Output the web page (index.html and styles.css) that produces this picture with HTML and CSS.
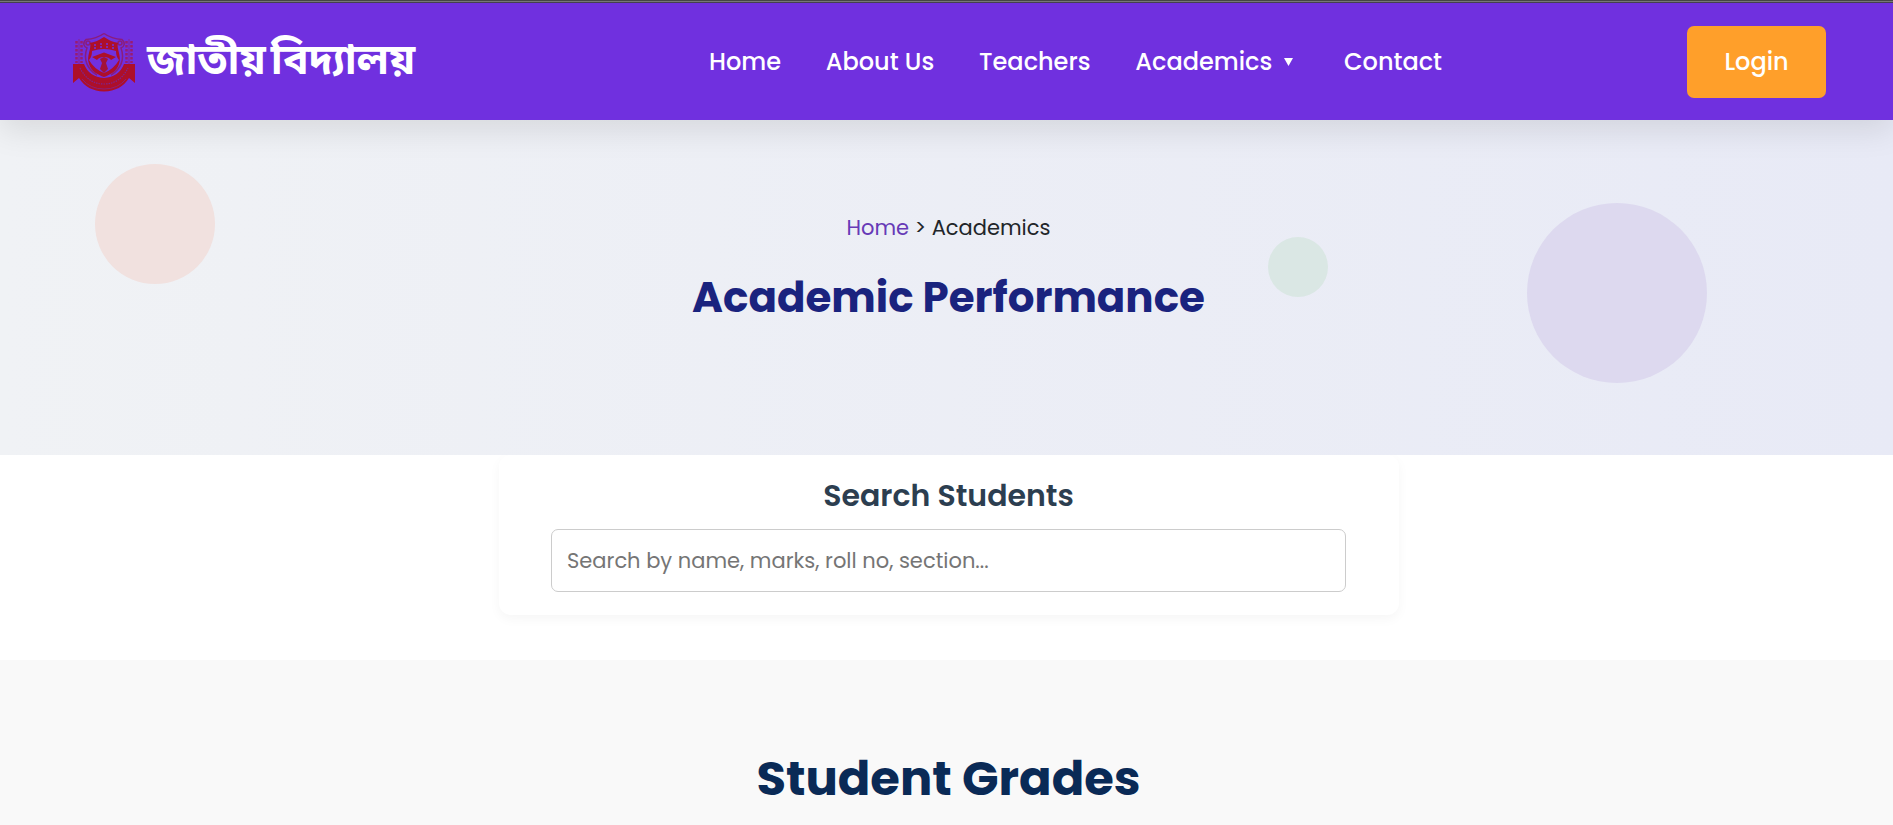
FILE: index.html
```html
<!DOCTYPE html>
<html lang="en">
<head>
<meta charset="utf-8">
<title>Academic Performance</title>
<link rel="stylesheet" href="styles.css">
</head>
<body>
<header class="header">
  <a class="brand">
    <svg class="crest" viewBox="0 0 62 60">
      <g fill="none" stroke="#8a1d7c" stroke-width="1.500">
        <path d="M31 1.500C26 5 20 7 13 7.500C9 11 11 15 14 16C10 27 14 37 24 43"/>
        <path d="M31 1.500C36 5 42 7 49 7.500C53 11 51 15 48 16C52 27 48 37 38 43"/>
        <circle cx="15" cy="11" r="2"/><circle cx="47" cy="11" r="2"/>
      </g>
      <path d="M31 5C25 9 21 10 17 11C19 16 13 24 16 32C18 39 25 43 31 45C37 43 44 39 46 32C49 24 43 16 45 11C41 10 37 9 31 5Z" fill="#ad0f2a"/>
      <path d="M19 19Q31 15 43 19Q43 25 46 28Q41 37 31 41Q21 37 16 28Q19 25 19 19Z" fill="#7130df"/>
      <path d="M22 17V12M28 16V10M34 16V10M40 17V12" stroke="#7130df" stroke-width="1.500" stroke-dasharray="2 1"/>
      <path d="M19 25L31 20.500L43 25L38 28Q36 25 31 25T24 28Z" fill="#ad1028"/>
      <path d="M27 27L31 25L35 27L33 31L35 37L31 41L27 37L29 31Z" fill="#a31238"/>
      <g fill="none" stroke="#981c72" stroke-width="2.500" stroke-dasharray="2.500 1.500">
        <path d="M3.500 9V31M8.500 9V31M53.500 9V31M58.500 9V31"/>
      </g>
      <path d="M6 7V32M56 7V32" stroke="#8a2090" stroke-width="1"/>
      <path d="M0 32L11 32Q16 45 31 46Q46 45 51 32L62 32V51L56 46Q48 59 31 59.500Q14 59 6 46L0 51Z" fill="#ad0f2a"/>
      <path d="M7 36Q15 52 31 52T55 36" fill="none" stroke="#7d2590" stroke-width="1.200" stroke-dasharray="1.500 1"/>
      <path d="M9 47Q17 57 31 57T53 47" fill="none" stroke="#8c1e76" stroke-width="1"/>
    </svg>
    <span class="brand-name" lang="bn">জাতীয় বিদ্যালয়</span>
  </a>
  <nav class="nav">
    <a>Home</a>
    <a>About Us</a>
    <a>Teachers</a>
    <a class="nav-academics">Academics<svg class="caret" viewBox="0 0 9 8"><path d="M0 0H9L4.500 8Z" fill="#fff"/></svg></a>
    <a>Contact</a>
  </nav>
  <a class="login">Login</a>
</header>
<main>
  <section class="hero">
    <i class="bubble bubble-pink"></i>
    <i class="bubble bubble-green"></i>
    <i class="bubble bubble-purple"></i>
    <p class="crumbs"><a>Home</a> &gt; Academics</p>
    <h1 class="hero-title">Academic Performance</h1>
  </section>
  <section class="search">
    <div class="search-card">
      <h2 class="search-title">Search Students</h2>
      <input class="search-input" type="text" placeholder="Search by name, marks, roll no, section...">
    </div>
  </section>
  <section class="grades">
    <h2 class="grades-title">Student Grades</h2>
  </section>
</main>
</body>
</html>
```
FILE: styles.css
```css
* { box-sizing: border-box; }
body {
  margin: 0;
  height: 825px;
  overflow: hidden;
  background: #fff;
  font-family: Poppins, Inter, "Noto Sans", sans-serif;
  color: #212529;
}
h1, h2, p { margin: 0; }
.header {
  position: relative;
  z-index: 2;
  height: 120px;
  padding: 3px 67px 0 73px;
  display: flex;
  align-items: center;
  justify-content: space-between;
  background: linear-gradient(#454545 0 1px, #777 1px 2px, #454050 2px 3px, #7030df 3px);
  box-shadow: 0 10px 30px rgba(0, 0, 0, .1);
  color: #fff;
}
.brand { display: flex; align-items: center; gap: 12px; width: 636px; }
.crest { width: 62px; height: 60px; }
.brand-name {
  font-family: "Noto Sans Bengali", Poppins, sans-serif;
  font-size: 42.6px;
  font-weight: 700;
  line-height: 56px;
  padding-top: 3px;
  word-spacing: -6px;
  white-space: nowrap;
}
.nav { display: flex; gap: 44.8px; flex: 1; font-size: 24px; font-weight: 500; white-space: nowrap; }
.nav-academics { display: flex; align-items: center; gap: 12px; margin-right: 6px; }
.caret { width: 9px; height: 8px; }
.login {
  width: 139px;
  height: 72px;
  border-radius: 7px;
  background: #ff9f2a;
  display: flex;
  align-items: center;
  justify-content: center;
  font-size: 24px;
  font-weight: 500;
}
.hero {
  position: relative;
  height: 335px;
  padding: 92px 0 0 4px;
  text-align: center;
  background: linear-gradient(90deg, #f0f2f5, #e8eaf6);
}
.bubble { position: absolute; border-radius: 50%; }
.bubble-pink { left: 95px; top: 44px; width: 120px; height: 120px; background: #f1e1df; }
.bubble-green { left: 1268px; top: 117px; width: 60px; height: 60px; background: #dae7e4; }
.bubble-purple { left: 1527px; top: 83px; width: 180px; height: 180px; background: #ddd9ef; }
.crumbs { font-size: 21px; line-height: 32px; }
.crumbs a { color: #673ab7; }
.hero-title { margin-top: 29px; font-size: 42px; line-height: 50px; font-weight: 700; color: #1a237e; }
.search { height: 205px; padding-left: 4px; }
.search-card {
  width: 900px;
  height: 160px;
  margin: 0 auto;
  padding: 23px 52px 0;
  border-radius: 12px;
  box-shadow: 0 4px 12px rgba(0, 0, 0, .04);
  text-align: center;
}
.search-title { font-size: 30px; line-height: 36px; font-weight: 600; color: #2c3e50; }
.search-input {
  display: block;
  width: 795px;
  height: 63px;
  margin-top: 15px;
  padding: 0 15.5px;
  border: 1px solid #ccc;
  border-radius: 7px;
  font: 21px Poppins, Inter, sans-serif;
}
.grades { height: 165px; padding: 90px 0 0 4px; background: #f9f9f9; text-align: center; }
.grades-title { font-size: 48px; line-height: 58px; font-weight: 700; color: #0a2a56; }
```
